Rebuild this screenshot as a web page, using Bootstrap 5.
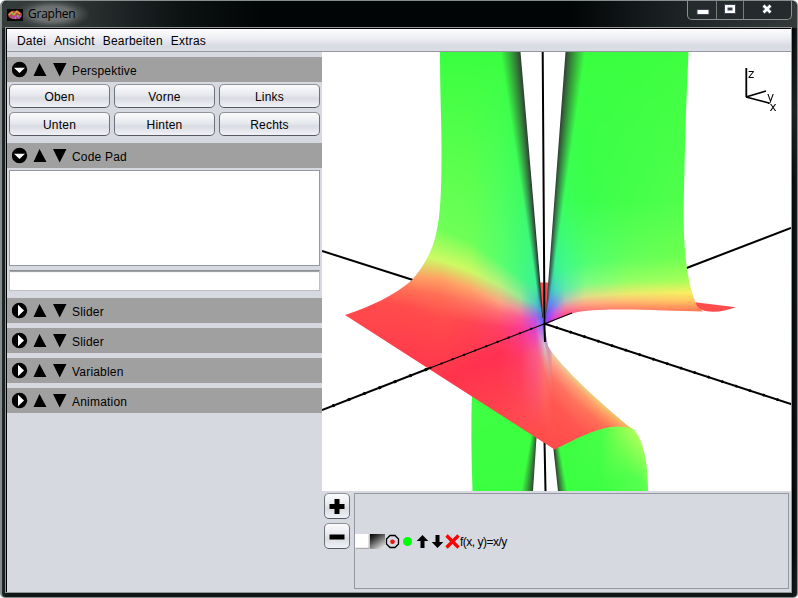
<!DOCTYPE html>
<html lang="de">
<head>
<meta charset="utf-8">
<title>Graphen</title>
<link href="https://cdn.jsdelivr.net/npm/bootstrap@5.3.0/dist/css/bootstrap.min.css" rel="stylesheet">
<style>
body{background:#fff;font:12px/15px "Liberation Sans",Arial,sans-serif;color:#000;letter-spacing:.2px}
.win{width:798px;height:598px;background:linear-gradient(90deg,#23292a 0,#10181a 4px,transparent 7px,transparent 791px,#26282a 798px),linear-gradient(#0a0d0e,#020506 28px,#1a2020 110px,#050a0c 180px,#020506 550px,#101616);border:1px solid #858d8d;border-left-width:2px;border-radius:6px 6px 5px 5px;padding:0 6px 6px 4px}
.titlebar{height:27px;margin:0 -6px 0 -4px;padding:0 6px 0 5px;border-radius:6px 6px 0 0;background:radial-gradient(ellipse 38px 15px at 50px 13px,#757979 0,#6c7070 50%,rgba(80,85,85,.6) 78%,transparent 100%),linear-gradient(90deg,#353c3c 0,#2b3232 80px,#0c1112 180px,#020506 260px,#020506 570px,#1e2426 680px,#34393a 798px)}
.caption{font:12px/16px "Open Sans","Noto Sans",sans-serif;letter-spacing:-.25px;margin:5px 0 0 5px;color:#000}
.winctl{height:19px;width:105px;margin-right:-1px;border:1px solid #8b9090;border-top:0;border-radius:0 0 5px 5px;background:#252b2d}
.winctl>div{border-right:1px solid #777c7d;height:18px}
.winctl>div:last-child{border:0}
.client{height:564px;outline:1px solid #929797;border:1px solid #000;border-width:1px 0 0 1px;background:#d6d9df;overflow:hidden}
.menus{height:23px;padding:5px 0 0 10px;gap:8px;background:linear-gradient(#fdfdfe,#eeeff3 40%,#d8dae2 80%,#dcdee5);border-bottom:1px solid #9297a1}
.side{width:315px}
.sect{height:25px;background:#a0a0a0;padding-left:5px}
.sect svg{flex:none}
.sect span{margin-left:5px;padding-top:3px}
.btns{display:grid;grid-template-columns:repeat(3,101px);gap:4px;padding:2px 2px 7px}
.btns button,.sq{height:24px;padding:0;border:1px solid #7b7f86;border-color:#8e939b #6e727a #565a60;border-radius:5px;background:linear-gradient(#fbfbfd,#e7e9ee 45%,#d9dce2 60%,#f0f2f6);color:#000}
.btns button{letter-spacing:.2px;padding-top:2px}
.pad{height:96px;margin:2px 2px 0;border:1px solid #9297a1;background:#fff}
.line{height:21px;margin:4px 2px 7px;border:1px solid #bcbfc4;border-top:1px solid #898c92;background:#fff;box-shadow:inset 0 2px 1px -1px #999}
.scene{width:469px;height:439px;background:#fff;position:relative}
.scene canvas,.scene svg{position:absolute;left:0;top:0}
.sq{width:26px;height:26px}
.funcs{width:435px;height:96px;border:1px solid #9297a1;padding-top:2px}
.fn{letter-spacing:-.5px}
#s1{margin-top:5px}
.folded{gap:5px}
.pads{gap:4px;padding:2px 4px 0 2px}
.funcs{margin-top:2px}
</style>
<script src="https://cdn.jsdelivr.net/npm/bootstrap@5.3.0/dist/js/bootstrap.bundle.min.js"></script>
</head>
<body class="overflow-hidden">
<svg width="0" height="0" class="d-none">
<symbol id="open" viewBox="0 0 55 18"><circle cx="7.500" cy="8.500" r="7.700"/><path d="M2 6.700h11L7.500 12z" fill="#fff"/><path d="M27.500 2l7 13h-13zM41 2h13.500L47.700 15.500z"/></symbol>
<symbol id="shut" viewBox="0 0 55 18"><circle cx="7.500" cy="8.500" r="7.700"/><path d="M6 2.700v11.600L12 8.500z" fill="#fff"/><path d="M27.500 2l7 13h-13zM41 2h13.500L47.700 15.500z"/></symbol>
</svg>
<div class="win">
 <div class="titlebar d-flex">
  <svg width="16" height="12" class="mt-2"><rect width="16" height="12" fill="#050505"/><ellipse cx="8" cy="6" rx="7" ry="4.200" fill="#b34a48"/><path d="M2 6l3-3 2 3 3-4 3 3" stroke="#e5a13a" fill="none" stroke-width="1.300"/><path d="M4 8l3 1 2-2 3 2 2-2" stroke="#b54ad0" fill="none" stroke-width="1.400"/><path d="M5 5h2m3 2h2M8 9h1" stroke="#54c95b" stroke-width="1.400"/></svg>
  <div class="caption">Graphen</div>
  <div class="winctl d-flex ms-auto">
   <div style="width:29px"><svg width="27" height="18"><rect x="9" y="8.500" width="12" height="5" rx="1" fill="#fff" stroke="#41465a"/></svg></div>
   <div style="width:27px"><svg width="26" height="18"><rect x="7.500" y="3.500" width="11" height="9" fill="#fff" stroke="#41465a"/><rect x="11" y="7" width="4" height="2" fill="#2a3034" stroke="#41465a"/></svg></div>
   <div class="flex-fill"><svg width="46" height="18"><path d="M19.500 4.500l7 7m0-7l-7 7" stroke="#41465a" stroke-width="4.500"/><path d="M19.500 4.500l7 7m0-7l-7 7" stroke="#fff" stroke-width="2.600"/></svg></div>
  </div>
 </div>
 <div class="client">
  <div class="menus d-flex"><span>Datei</span><span>Ansicht</span><span>Bearbeiten</span><span>Extras</span></div>
  <div class="d-flex">
   <div class="side d-flex flex-column flex-shrink-0">
    <div class="sect d-flex align-items-center" id="s1"><svg width="55" height="18"><use href="#open"/></svg><span>Perspektive</span></div>
    <div class="btns"><button>Oben</button><button>Vorne</button><button>Links</button><button>Unten</button><button>Hinten</button><button>Rechts</button></div>
    <div class="sect d-flex align-items-center"><svg width="55" height="18"><use href="#open"/></svg><span>Code Pad</span></div>
    <div class="pad"></div><div class="line"></div>
    <div class="folded d-flex flex-column">
     <div class="sect d-flex align-items-center"><svg width="55" height="18"><use href="#shut"/></svg><span>Slider</span></div>
     <div class="sect d-flex align-items-center"><svg width="55" height="18"><use href="#shut"/></svg><span>Slider</span></div>
     <div class="sect d-flex align-items-center"><svg width="55" height="18"><use href="#shut"/></svg><span>Variablen</span></div>
     <div class="sect d-flex align-items-center"><svg width="55" height="18"><use href="#shut"/></svg><span>Animation</span></div>
    </div>
   </div>
   <div class="flex-shrink-0">
    <div class="scene">
     <canvas id="plot" width="469" height="439"></canvas>
     <svg width="469" height="439" viewBox="322 52 469 439" fill="none" stroke="#000">
      <path d="M544 324L430 368" stroke-width="1.100"/><path d="M532 328.500L430 368" stroke-width="2" stroke-dasharray="2 10"/>
      <path d="M430 368L322 410" stroke-width="1.900"/><path d="M427 369.200L322 410" stroke-width="2.900" stroke-dasharray="2.500 14"/>
      <path d="M544 324L572 313" stroke-width="1.200"/>
      <path d="M544 323.500L791 404" stroke-width="1.900"/><path d="M556 327.400L791 404" stroke-width="2.700" stroke-dasharray="2 12.500"/>
      <path d="M542.700 52L544.500 327L545 342" stroke-width="2"/>
      <path d="M746.300 68V97M746 97L766 91M746 97L769 103" stroke-width="1.800"/>
      <g fill="#000" stroke="none" font-family="DejaVu Sans" font-size="12" letter-spacing="0"><text x="748" y="78">z</text><text x="767" y="101">y</text><text x="769.500" y="110.500">x</text></g>
     </svg>
    </div>
    <div class="d-flex">
     <div class="d-flex flex-column pads">
      <button class="sq"><svg width="24" height="22" class="d-block"><path d="M4.500 11.500h15M12 4v15" stroke="#000" stroke-width="5"/></svg></button>
      <button class="sq"><svg width="24" height="22" class="d-block"><path d="M4.500 12h15" stroke="#000" stroke-width="5"/></svg></button>
     </div>
     <div class="funcs d-flex align-items-center">
      <svg width="105" height="16" viewBox="355 534 105 16">
       <defs><linearGradient id="sh" x1="0" y1="0" x2=".7" y2="1"><stop stop-color="#000"/><stop offset=".3" stop-color="#333"/><stop offset="1" stop-color="#ddd"/></linearGradient></defs>
       <path d="M369 534.500v14H356" stroke="#aaa" fill="none"/><path d="M355 534h13.500v13.500H355z" fill="#fff"/><path d="M370 534h15v15h-15z" fill="url(#sh)"/>
       <path d="M390 535.500h5l3.500 3.500v5l-3.500 3.500h-5l-3.500-3.500v-5z" fill="none" stroke="#000" stroke-width="1.300"/><circle cx="392.500" cy="541.800" r="2.300" fill="#f01010"/>
       <circle cx="407.500" cy="541.500" r="4.500" fill="#0f0"/>
       <path d="M422.500 535l5.800 6h-3.800v7h-4v-7h-3.800zM437.500 548l-5.800-6h3.800v-7h4v7h3.800z"/>
       <path d="M446.500 535.500l12 12m0-12l-12 12" stroke="#f00" stroke-width="3.300"/>
      </svg><span class="fn">f(x, y)=x/y</span>
     </div>
    </div>
   </div>
  </div>
 </div>
</div>
<script>
const cv=document.getElementById('plot'),g=cv.getContext('2d');
g.translate(-322,-52);
const G=[58,255,64],R=[255,76,76];
// colour stops along y for key columns; the nth stops of neighbouring columns lie on one contour line
const Y=[205,250,100],O=[255,160,100],L=[110,255,86],Q=[255,112,86],D=[255,52,76];
const left=[
[345,[52,G],[180,L],[238,Y],[262,O],[278,Q],[295,R],[400,D],[460,R]],
[413,[52,G],[218,L],[254,Y],[276,O],[290,Q],[308,R],[375,D],[455,R]],
[441,[52,G],[228,L],[260,Y],[279,O],[295,Q],[318,R],[378,D],[453,R]],
[470,[52,G],[241,L],[270,Y],[288,[255,165,106]],[302,[255,118,96]],[323,[255,68,80]],[368,[255,50,77]],[450,R]],
[500,[52,G],[262,[90,255,108]],[285,[185,240,128]],[302,[250,165,132]],[312,[255,110,118]],[326,[255,65,105]],[352,[255,48,82]],[440,R]],
[520,[110,[56,255,70]],[276,[70,250,125]],[297,[150,232,150]],[309,[228,145,160]],[317,[248,90,155]],[329,[250,55,145]],[358,[255,58,98]],[430,R]],
[535,[130,[55,252,90]],[284,[60,242,148]],[303,[75,205,195]],[313,[145,125,222]],[320,[190,82,230]],[330,[225,65,205]],[350,[248,90,140]],[430,R]],
[544,[200,[45,200,120]],[290,[45,150,150]],[312,[62,110,225]],[322,[95,80,255]],[332,[150,130,235]],[345,[205,195,200]],[370,[255,115,110]],[430,R]],
[552,[260,[220,220,180]],[310,[220,220,180]],[340,[220,220,180]],[352,[225,215,165]],[361,[255,165,140]],[378,[255,112,98]],[402,[255,86,80]],[449,R]],
[575,[300,[230,215,140]],[340,[230,215,140]],[360,[230,215,140]],[378,[230,210,135]],[386,[255,160,115]],[402,[255,115,92]],[425,[255,86,80]],[449,R]],
[600,[300,Y],[360,Y],[380,Y],[401,[235,210,120]],[409,[255,162,102]],[422,[255,112,86]],[440,[255,88,80]],[460,R]],
[634,[300,Y],[360,Y],[400,Y],[426,[225,215,100]],[436,[255,155,90]],[444,Q],[455,R],[470,R]]];
const right=[
[546,[52,[50,200,80]],[200,[45,180,105]],[260,[45,160,130]],[290,[55,170,190]],[304,[75,125,245]],[312,[110,80,252]],[322,[160,60,245]]],
[555,[52,G],[200,[55,255,102]],[270,[60,240,150]],[290,[75,212,195]],[304,[120,145,232]],[312,[200,98,220]],[320,[245,55,185]]],
[565,[52,G],[200,[58,255,88]],[268,[65,250,138]],[288,[95,235,168]],[300,[180,195,182]],[307,[240,135,160]],[315,[255,72,135]]],
[585,[52,G],[200,[58,255,76]],[262,[80,255,112]],[284,[130,252,132]],[296,[222,222,138]],[303,[255,170,132]],[312,[255,105,112]]],
[630,[52,G],[200,[68,255,75]],[258,[100,255,90]],[280,[148,255,98]],[293,[235,235,108]],[300,[255,192,112]],[310,[255,122,98]]],
[684,[52,[62,255,64]],[200,[80,255,75]],[256,[110,255,80]],[280,[165,255,88]],[292,[248,238,98]],[300,[255,202,98]],[310,[255,125,88]]],
[698,[52,G],[200,[84,255,75]],[256,[115,255,80]],[280,[175,255,88]],[292,[250,235,98]],[300,[255,195,96]],[311,[255,115,85]]]];
const mix=(a,b,t)=>a.map((v,i)=>v+(b[i]-v)*t);
function at(s,y){
 if(y<=s[0][0])return s[0][1];
 for(let i=1;i<s.length;i++)if(y<=s[i][0])return mix(s[i-1][1],s[i][1],(y-s[i-1][0])/(s[i][0]-s[i-1][0]));
 return s[s.length-1][1];
}
function sheet(path,cols,x0,x1,y0,y1,edge){
 g.save();g.clip(new Path2D(path));
 for(let x=x0;x<x1;x++){
  let i=0;while(i<cols.length-2&&x>cols[i+1][0])i++;
  const a=cols[i],b=cols[i+1],t=Math.max(0,Math.min(1,(x-a[0])/(b[0]-a[0])));
  const stops=a.slice(1).map((s,k)=>[s[0]+(b[k+1][0]-s[0])*t,mix(s[1],b[k+1][1],t)]);
  for(let y=y0;y<y1;y++){
   let c=at(stops,y);
   if(edge){const [d,w]=edge(x+.5,y);if(w>0&&d<w)c=mix([48,60,50],c,Math.pow(Math.max(0,d/w),.85));}
   g.fillStyle='rgb('+c.map(Math.round)+')';g.fillRect(x,y,1,1);
  }
 }
 g.restore();
}
function line(x1,y1,x2,y2,w){g.lineWidth=w;g.beginPath();g.moveTo(x1,y1);g.lineTo(x2,y2);g.stroke();}
// axes behind the surface
line(322,251,413,280,2);line(684,269,791,228,2);line(544.5,440,545.5,491,2);
g.fillStyle='rgb(255,76,76)';
g.fill(new Path2D('M538 282.500H550L545 326Z'));
g.fill(new Path2D('M693 302L736 307.300C725 311 716 313 705 311L694 307Z'));
// lower green parts
const low=[[472,[390,[64,255,68]],[491,G]],[554,[440,G],[491,G]],[600,[430,[72,255,72]],[491,[60,255,68]]],[625,[425,[155,255,85]],[475,[78,255,74]]],[640,[430,[195,255,95]],[480,[85,255,78]]],[648,[430,[190,255,100]],[491,[100,255,86]]]];
sheet('M472 390Q470.500 435 472.500 491H533L537 430Z',low,470,538,390,491,(x,y)=>[533+(491-y)*.07-x,12-(491-y)*.11]);
sheet('M553 445C580 430 610 420 632 428C644 438 648 465 648 491H558Z',low,552,650,420,491,(x,y)=>[x-554-(y-449)*.095,6+(y-449)*.09]);
const fade=y=>y<318?Math.max(2.5,20-(y-52)*.07)*Math.min(1,(318-y)/20):0;
sheet('M565.500 52H688.500Q685 120 684 190C683 235 684 275 697 306L703 311.500C665 311 610 307 578 312Q567 314 545 325Z',right,544,706,52,326,(x,y)=>[x-(565.500-(y-52)*.075),fade(y)]);
sheet('M440 52C440 100 442 130 441.500 160C441 225 438 250 412 280C395 295 370 307 345 315L554.500 449.500C580 437 610 420 632 429C605 407 560 367 548 346L544 325L520.500 52Z',left,344,635,52,451,(x,y)=>[520.500+(y-52)*.083-x,fade(y)]);
</script>
</body>
</html>
